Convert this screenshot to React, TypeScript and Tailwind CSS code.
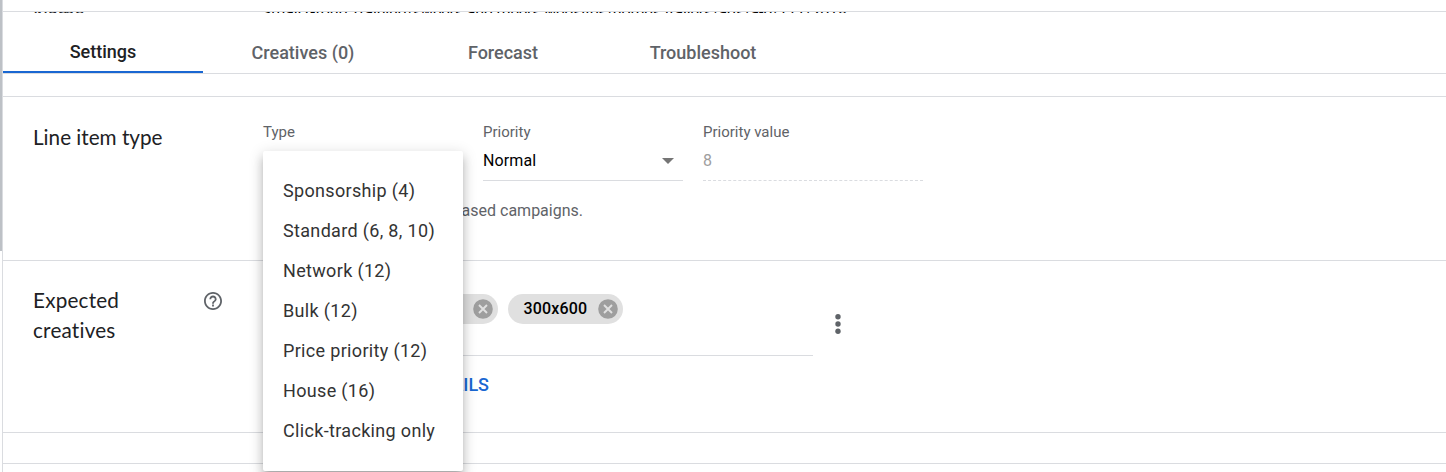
import type { ReactNode } from "react";

const types = ["Sponsorship (4)", "Standard (6, 8, 10)", "Network (12)", "Bulk (12)", "Price priority (12)", "House (16)", "Click-tracking only"];

function Chip({ children }: { children: ReactNode }) {
  return (
    <div className="flex h-[30px] w-[115px] shrink-0 items-center justify-between rounded-full bg-[#e0e0e0] pl-[15.5px] pr-[5.5px] text-[16px] font-medium tracking-[0.15px] text-black">
      <span className="-mt-[1px]">{children}</span>
      <svg width="20" height="20" viewBox="0 0 20 20">
        <circle cx="10" cy="10" r="9.8" fill="#9e9e9e" />
        <path d="M6 6l8 8M14 6l-8 8" stroke="#e0e0e0" strokeWidth="1.9" />
      </svg>
    </div>
  );
}

export default function App() {
  return (
    <div className="flex h-[472px] w-[1446px] overflow-hidden bg-white font-['Roboto',sans-serif] text-[#5f6368]">
      <div className="h-full w-[2px] shrink-0">
        <div className="h-[251px] bg-[#bdc1c6]" />
      </div>
      <div className="flex h-full flex-1 flex-col border-l border-[#dadce0]">
        <div className="h-[11px] shrink-0" />
        <div className="flex h-[2px] shrink-0 overflow-hidden border-t border-[#dadce0] pl-[30px] text-[16px] leading-[20px]">
          <div className="-mt-[9px] w-[229px] font-['Lato',sans-serif] text-[20px] text-[#202124]">Name</div>
          <div className="-mt-[9px] whitespace-nowrap tracking-[-0.17px] text-black">Small Group Training/sweers and meers websites/homes trailers/ads/a-b/171/2018</div>
        </div>
        <nav className="flex h-[61px] shrink-0 border-b border-[#dadce0] text-center text-[18px] font-medium leading-[21px]">
          <div className="h-[60px] w-[200px] border-b-2 border-[#1967d2] pt-[28px] text-[#202124]">Settings</div>
          <div className="w-[200px] pt-[29px]">Creatives (0)</div>
          <div className="w-[200px] pt-[29px]">Forecast</div>
          <div className="w-[200px] pt-[29px]">Troubleshoot</div>
        </nav>
        <div className="h-[22px] shrink-0" />
        <section className="flex h-[164px] shrink-0 border-t border-[#dadce0] pl-[30px]">
          <h2 className="w-[230px] pt-[25px] font-['Lato',sans-serif] text-[20.7px] leading-[30px] text-[#202124]">Line item type</h2>
          <div className="relative flex flex-col">
            <div className="flex h-[84px] gap-[20px] pt-[25px] text-[15px] leading-[20px]">
              <div className="w-[200px]">Type</div>
              <div className="w-[200px]">
                <div>Priority</div>
                <div className="mt-[4px] flex h-[35px] items-center justify-between border-b border-[#dadce0] pb-[4px] pr-[8px] text-[16px] tracking-[0.1px] text-black">
                  <span>Normal</span>
                  <svg width="14" height="8" viewBox="0 0 14 8"><path d="M1 1h12L7 7z" fill="#757575" /></svg>
                </div>
              </div>
              <div className="w-[220px]">
                <div>Priority value</div>
                <div className="mt-[4px] flex h-[35px] items-center border-b border-dashed border-[#dadce0] pb-[4px] text-[16px] text-[#9e9e9e]">8</div>
              </div>
            </div>
            <p className="mt-[20px] w-[320px] whitespace-nowrap text-right text-[16px] leading-[20px]">Used for goal-based campaigns.</p>
            <ul className="absolute left-0 top-[54px] z-10 h-[320px] w-[200px] rounded-[2px] bg-white pt-[20px] text-[18px] leading-[40px] tracking-[0.33px] text-[#333] shadow-[0_5px_5px_-3px_rgba(0,0,0,.2),0_8px_10px_1px_rgba(0,0,0,.14),0_3px_14px_2px_rgba(0,0,0,.12)]">
              {types.map((t) => <li key={t} className="whitespace-nowrap pl-[20px]">{t}</li>)}
            </ul>
          </div>
        </section>
        <section className="flex h-[172px] shrink-0 border-t border-[#dadce0] pl-[30px]">
          <h2 className="w-[171px] pr-[60px] pt-[24px] font-['Lato',sans-serif] text-[20.7px] leading-[30px] tracking-[0.2px] text-[#202124]">Expected creatives</h2>
          <div className="w-[59px] pt-[31px]">
            <svg width="18" height="18" viewBox="2 2 20 20" fill="#5f6368">
              <path d="M11 18h2v-2h-2v2zm1-16C6.48 2 2 6.48 2 12s4.48 10 10 10 10-4.48 10-10S17.52 2 12 2zm0 18c-4.41 0-8-3.59-8-8s3.59-8 8-8 8 3.59 8 8-3.59 8-8 8zm0-14c-2.21 0-4 1.79-4 4h2c0-1.1.9-2 2-2s2 .9 2 2c0 2-3 1.75-3 5h2c0-2.25 3-2.5 3-5 0-2.21-1.79-4-4-4z" />
            </svg>
          </div>
          <div className="w-[550px]">
            <div className="flex h-[95px] gap-[10px] border-b border-[#dadce0] pl-[120px] pt-[33px]">
              <Chip>300x250</Chip>
              <Chip>300x600</Chip>
            </div>
            <div className="w-[226px] whitespace-nowrap pt-[18px] text-right text-[18px] font-medium leading-[22px] text-[#1967d2]">SHOW DETAILS</div>
          </div>
          <svg className="ml-[22px] mt-[53px]" width="6" height="20" viewBox="0 0 6 20" fill="#5f6368">
            <circle cx="3" cy="2.7" r="2.7" /><circle cx="3" cy="10" r="2.7" /><circle cx="3" cy="17.3" r="2.7" />
          </svg>
        </section>
        <div className="h-[31px] shrink-0 border-t border-[#dadce0]" />
        <div className="flex-1 border-t border-[#dadce0]" />
      </div>
    </div>
  );
}
